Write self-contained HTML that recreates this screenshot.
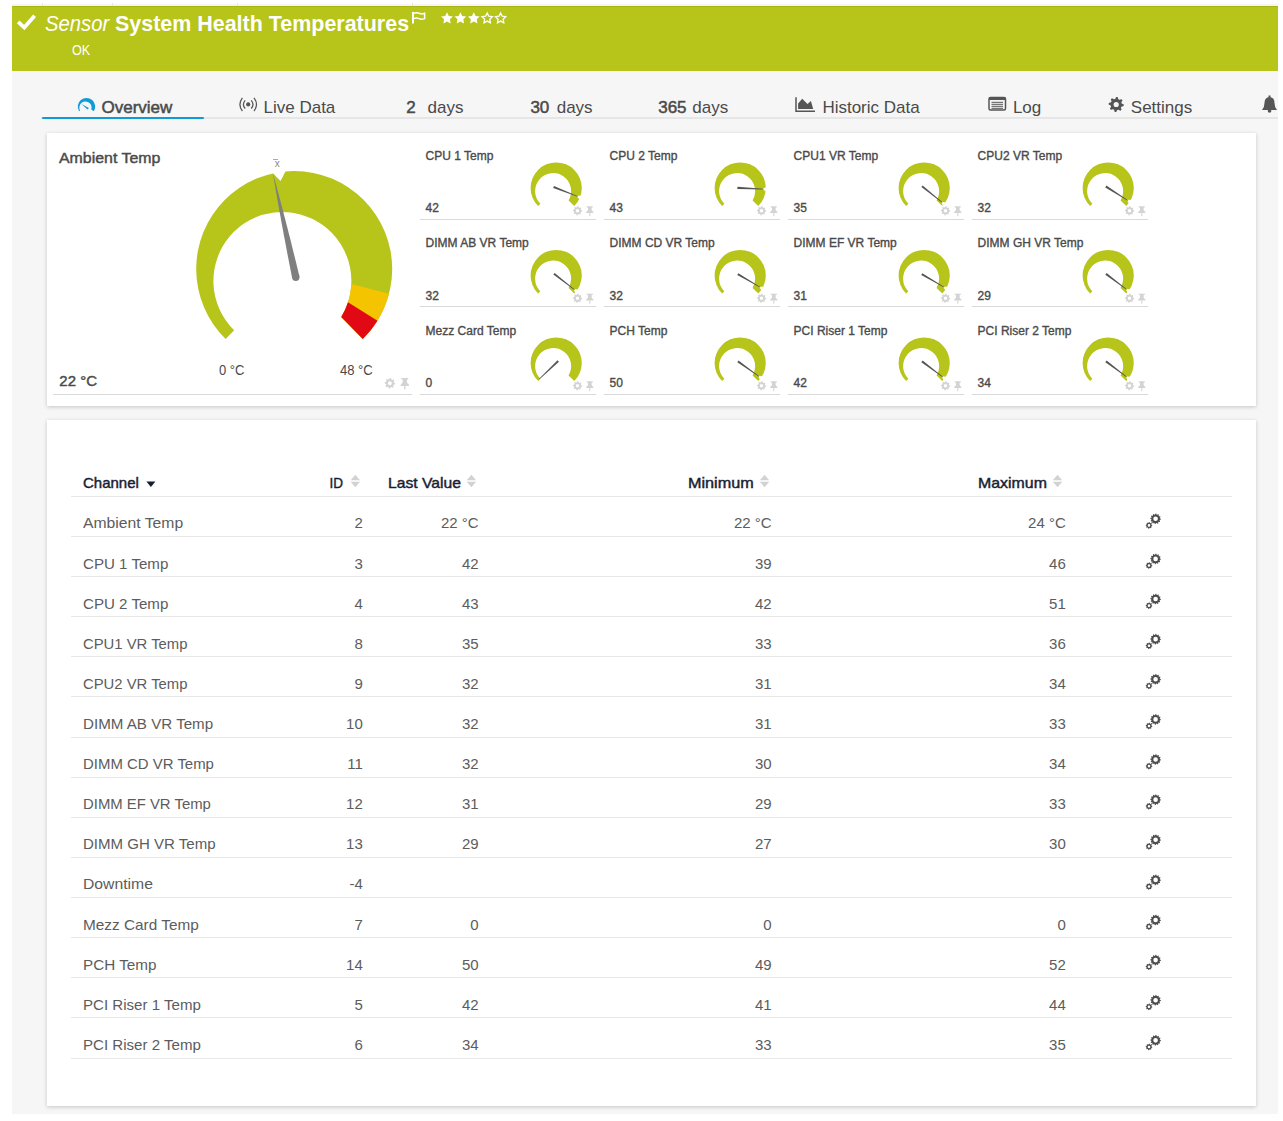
<!DOCTYPE html>
<html><head><meta charset="utf-8"><title>Sensor System Health Temperatures</title>
<style>
html,body{margin:0;padding:0;background:#fff;width:1283px;height:1121px;overflow:hidden;font-family:"Liberation Sans", sans-serif;}
.t{position:absolute;white-space:nowrap;}
.r{position:absolute;}
svg{position:absolute;left:0;top:0;}
</style></head><body>
<div class="r" style="left:12px;top:4px;width:1266px;height:1110px;background:#f6f6f6;"></div>
<div class="r" style="left:12px;top:4px;width:1266px;height:2px;background:#f4f4f6;"></div>
<div class="r" style="left:12px;top:6px;width:1266px;height:65px;background:#b7c41a;"></div>
<div class="r" style="left:12px;top:6px;width:1266px;height:1px;background:#a9b512;"></div>
<div class="r" style="left:42px;top:3px;width:1px;height:3px;background:#e6e6e6;"></div>
<div class="r" style="left:112px;top:3px;width:1px;height:3px;background:#e6e6e6;"></div>
<div class="r" style="left:237px;top:3px;width:1px;height:3px;background:#e6e6e6;"></div>
<div class="r" style="left:412px;top:3px;width:1px;height:3px;background:#e6e6e6;"></div>
<div class="r" style="left:41px;top:116.6px;width:1237px;height:2px;background:#e6e6e6;"></div>
<div class="r" style="left:41.5px;top:116.6px;width:162.5px;height:2.4px;background:#0f9ad8;border-radius:1px;"></div>
<div class="r" style="left:47px;top:133px;width:1209px;height:273px;background:#fff;box-shadow:0 1px 4px rgba(0,0,0,0.2);"></div>
<div class="r" style="left:47px;top:420px;width:1209px;height:686px;background:#fff;box-shadow:0 1px 4px rgba(0,0,0,0.2);"></div>
<svg width="1283" height="1121" viewBox="0 0 1283 1121" style="z-index:1"><polyline points="18.2,21.8 24.3,27.6 34.6,15.8" fill="none" stroke="#fff" stroke-width="3.8"/><path d="M413,12 V23.5" fill="none" stroke="#fff" stroke-width="2"/><path d="M414,13.3 Q416.5,12.2 419,13.3 Q421.5,14.4 424.6,13.3 V18.6 Q421.5,19.7 419,18.6 Q416.5,17.5 414,18.6" fill="none" stroke="#fff" stroke-width="1.5"/><polygon points="447.00,12.20 448.82,15.89 452.90,16.48 449.95,19.36 450.64,23.42 447.00,21.50 443.36,23.42 444.05,19.36 441.10,16.48 445.18,15.89" fill="#fff"/><polygon points="460.40,12.20 462.22,15.89 466.30,16.48 463.35,19.36 464.04,23.42 460.40,21.50 456.76,23.42 457.45,19.36 454.50,16.48 458.58,15.89" fill="#fff"/><polygon points="473.80,12.20 475.62,15.89 479.70,16.48 476.75,19.36 477.44,23.42 473.80,21.50 470.16,23.42 470.85,19.36 467.90,16.48 471.98,15.89" fill="#fff"/><polygon points="487.20,13.00 488.79,16.22 492.34,16.73 489.77,19.23 490.37,22.77 487.20,21.10 484.03,22.77 484.63,19.23 482.06,16.73 485.61,16.22" fill="none" stroke="#fff" stroke-width="1.3" stroke-linejoin="miter"/><polygon points="500.60,13.00 502.19,16.22 505.74,16.73 503.17,19.23 503.77,22.77 500.60,21.10 497.43,22.77 498.03,19.23 495.46,16.73 499.01,16.22" fill="none" stroke="#fff" stroke-width="1.3" stroke-linejoin="miter"/><path d="M79.12,111.21 A8.70,8.70 0 1 1 93.88,111.21 L91.27,109.58 A6.12,6.12 0 1 0 80.08,110.61 Z" fill="#0f9ad8"/><path d="M81.4,103.9 L88.9,107.9 L87.6,109.5 Z" fill="#0f9ad8"/><circle cx="248.2" cy="104.4" r="2.1" fill="#555"/><path d="M245.2,100.3 Q241.6,104.4 245.2,108.5 M251.2,100.3 Q254.8,104.4 251.2,108.5 M242.4,97.8 Q237.4,104.4 242.4,111.0 M254.0,97.8 Q259.0,104.4 254.0,111.0" fill="none" stroke="#555" stroke-width="1.25"/><path d="M796,97.2 V111.3 H815" fill="none" stroke="#555" stroke-width="1.5"/><path d="M798.1,109 V103.6 L802.2,98.7 L807.5,104 L810.9,101 L813.2,109 Z" fill="#555"/><rect x="989" y="97.5" width="16.5" height="12.5" rx="1.5" fill="none" stroke="#555" stroke-width="1.5"/><rect x="989" y="97.5" width="16.5" height="2.5" fill="#555"/><rect x="991.5" y="101.8" width="11.5" height="1" fill="#555"/><rect x="991.5" y="103.8" width="11.5" height="1" fill="#555"/><rect x="991.5" y="105.8" width="11.5" height="1" fill="#555"/><rect x="991.5" y="107.8" width="11.5" height="1" fill="#555"/><path d="M1116.20,96.90 L1117.68,97.05 L1118.34,99.33 L1119.31,99.84 L1121.57,99.13 L1122.52,100.28 L1121.37,102.36 L1121.69,103.41 L1123.80,104.50 L1123.65,105.98 L1121.37,106.64 L1120.86,107.61 L1121.57,109.87 L1120.42,110.82 L1118.34,109.67 L1117.29,109.99 L1116.20,112.10 L1114.72,111.95 L1114.06,109.67 L1113.09,109.16 L1110.83,109.87 L1109.88,108.72 L1111.03,106.64 L1110.71,105.59 L1108.60,104.50 L1108.75,103.02 L1111.03,102.36 L1111.54,101.39 L1110.83,99.13 L1111.98,98.18 L1114.06,99.33 L1115.11,99.01 Z M1118.80,104.50 A2.6,2.6 0 1 0 1113.60,104.50 A2.6,2.6 0 1 0 1118.80,104.50 Z" fill="#555" fill-rule="evenodd"/><path d="M1262,110 Q1264.5,107 1264.5,103 Q1264.5,97.5 1269.5,97 Q1274.5,97.5 1274.5,103 Q1274.5,107 1277,110 Z" fill="#555"/><circle cx="1269.5" cy="111" r="1.8" fill="#555"/><rect x="1268.5" y="95.5" width="2" height="2" fill="#555"/><path d="M225.63,339.02 A98.00,98.00 0 1 1 362.77,339.02 L341.23,317.03 A68.99,68.99 0 1 0 234.16,330.31 Z" fill="#b7c41a"/><path d="M388.99,293.87 A98.00,98.00 0 0 1 362.77,339.02 L341.23,317.03 A68.99,68.99 0 0 0 351.33,283.99 Z" fill="#f5c400"/><path d="M377.49,320.64 A98.00,98.00 0 0 1 362.77,339.02 L341.23,317.03 A68.99,68.99 0 0 0 348.00,302.36 Z" fill="#e10a14"/><path d="M271.36,171.64 L280.58,181.05 L286.53,169.29 Z" fill="#fff"/><path d="M299.41,276.40 Q288.28,229.60 272.80,172.80 Q282.62,230.84 292.19,278.00 Z" fill="#7f7f7f"/><circle cx="295.8" cy="277.2" r="3.7" fill="#7f7f7f"/><path d="M538.10,206.10 A25.60,25.60 0 1 1 574.30,206.10 L568.58,200.38 A18.02,18.02 0 1 0 540.35,203.85 Z" fill="#b7c41a"/><path d="M582.85,195.19 L576.66,196.10 L580.55,201.00 Z" fill="#fff"/><path d="M553.21,187.95 L577.64,196.87 L577.90,196.22 L553.98,185.99 Z" fill="#555"/><path d="M722.10,206.10 A25.60,25.60 0 1 1 758.30,206.10 L752.58,200.38 A18.02,18.02 0 1 0 724.35,203.85 Z" fill="#b7c41a"/><path d="M767.74,186.17 L762.18,189.04 L767.44,192.41 Z" fill="#fff"/><path d="M737.35,188.92 L763.36,189.44 L763.39,188.74 L737.45,186.82 Z" fill="#555"/><path d="M906.10,206.10 A25.60,25.60 0 1 1 942.30,206.10 L936.58,200.38 A18.02,18.02 0 1 0 908.35,203.85 Z" fill="#b7c41a"/><path d="M947.48,202.83 L941.30,201.85 L943.55,207.69 Z" fill="#fff"/><path d="M921.36,187.05 L942.01,202.87 L942.45,202.33 L922.68,185.42 Z" fill="#555"/><path d="M1090.10,206.10 A25.60,25.60 0 1 1 1126.30,206.10 L1120.58,200.38 A18.02,18.02 0 1 0 1092.35,203.85 Z" fill="#b7c41a"/><path d="M1133.03,200.06 L1126.78,199.79 L1129.68,205.33 Z" fill="#fff"/><path d="M1105.27,187.39 L1127.60,200.73 L1127.98,200.14 L1106.40,185.61 Z" fill="#555"/><path d="M538.10,293.60 A25.60,25.60 0 1 1 574.30,293.60 L568.58,287.88 A18.02,18.02 0 1 0 540.35,291.35 Z" fill="#b7c41a"/><path d="M579.78,289.84 L573.58,288.98 L575.95,294.78 Z" fill="#fff"/><path d="M553.34,274.61 L574.32,290.00 L574.75,289.44 L554.63,272.95 Z" fill="#555"/><path d="M722.10,293.60 A25.60,25.60 0 1 1 758.30,293.60 L752.58,287.88 A18.02,18.02 0 1 0 724.35,291.35 Z" fill="#b7c41a"/><path d="M765.43,286.68 L759.18,286.63 L762.27,292.07 Z" fill="#fff"/><path d="M737.25,274.99 L760.03,287.54 L760.39,286.94 L738.32,273.18 Z" fill="#555"/><path d="M906.10,293.60 A25.60,25.60 0 1 1 942.30,293.60 L936.58,287.88 A18.02,18.02 0 1 0 908.35,291.35 Z" fill="#b7c41a"/><path d="M949.41,286.73 L943.16,286.67 L946.24,292.11 Z" fill="#fff"/><path d="M921.25,274.98 L944.01,287.58 L944.37,286.97 L922.32,273.17 Z" fill="#555"/><path d="M1090.10,293.60 A25.60,25.60 0 1 1 1126.30,293.60 L1120.58,287.88 A18.02,18.02 0 1 0 1092.35,291.35 Z" fill="#b7c41a"/><path d="M1131.93,289.59 L1125.72,288.80 L1128.15,294.57 Z" fill="#fff"/><path d="M1105.33,274.64 L1126.47,289.81 L1126.89,289.25 L1106.60,272.97 Z" fill="#555"/><path d="M538.10,381.10 A25.60,25.60 0 1 1 574.30,381.10 L568.58,375.38 A18.02,18.02 0 1 0 540.35,378.85 Z" fill="#b7c41a"/><path d="M557.52,360.32 L539.08,378.66 L539.56,379.17 L558.96,361.84 Z" fill="#555"/><path d="M722.10,381.10 A25.60,25.60 0 1 1 758.30,381.10 L752.58,375.38 A18.02,18.02 0 1 0 724.35,378.85 Z" fill="#b7c41a"/><path d="M764.32,376.42 L758.09,375.81 L760.68,381.50 Z" fill="#fff"/><path d="M737.31,362.22 L758.86,376.79 L759.27,376.22 L738.53,360.52 Z" fill="#555"/><path d="M906.10,381.10 A25.60,25.60 0 1 1 942.30,381.10 L936.58,375.38 A18.02,18.02 0 1 0 908.35,378.85 Z" fill="#b7c41a"/><path d="M947.98,377.01 L941.77,376.24 L944.22,382.00 Z" fill="#fff"/><path d="M921.33,362.15 L942.52,377.24 L942.94,376.68 L922.60,360.48 Z" fill="#555"/><path d="M1090.10,381.10 A25.60,25.60 0 1 1 1126.30,381.10 L1120.58,375.38 A18.02,18.02 0 1 0 1092.35,378.85 Z" fill="#b7c41a"/><path d="M1131.96,377.05 L1125.75,376.27 L1128.19,382.03 Z" fill="#fff"/><path d="M1105.33,362.15 L1126.49,377.27 L1126.92,376.72 L1106.60,360.47 Z" fill="#555"/><path d="M577.50,206.20 L578.40,206.29 L578.84,207.57 L579.44,207.89 L580.75,207.55 L581.32,208.24 L580.73,209.46 L580.93,210.12 L582.10,210.80 L582.01,211.70 L580.73,212.14 L580.41,212.74 L580.75,214.05 L580.06,214.62 L578.84,214.03 L578.18,214.23 L577.50,215.40 L576.60,215.31 L576.16,214.03 L575.56,213.71 L574.25,214.05 L573.68,213.36 L574.27,212.14 L574.07,211.48 L572.90,210.80 L572.99,209.90 L574.27,209.46 L574.59,208.86 L574.25,207.55 L574.94,206.98 L576.16,207.57 L576.82,207.37 Z M579.20,210.80 A1.7,1.7 0 1 0 575.80,210.80 A1.7,1.7 0 1 0 579.20,210.80 Z" fill="#d3d3d3" fill-rule="evenodd"/><g transform="translate(589.80,210.80) scale(1.0) translate(-589.80,-210.80)"><path d="M586.80,206.30 h6 v1.3 h-1.2 v2.6 l1.8,1.8 v1.1 h-7.2 v-1.1 l1.8,-1.8 v-2.6 h-1.2 Z" fill="#d3d3d3"/><rect x="589.25" y="213.10" width="1.1" height="3" fill="#d3d3d3"/></g><path d="M761.50,206.20 L762.40,206.29 L762.84,207.57 L763.44,207.89 L764.75,207.55 L765.32,208.24 L764.73,209.46 L764.93,210.12 L766.10,210.80 L766.01,211.70 L764.73,212.14 L764.41,212.74 L764.75,214.05 L764.06,214.62 L762.84,214.03 L762.18,214.23 L761.50,215.40 L760.60,215.31 L760.16,214.03 L759.56,213.71 L758.25,214.05 L757.68,213.36 L758.27,212.14 L758.07,211.48 L756.90,210.80 L756.99,209.90 L758.27,209.46 L758.59,208.86 L758.25,207.55 L758.94,206.98 L760.16,207.57 L760.82,207.37 Z M763.20,210.80 A1.7,1.7 0 1 0 759.80,210.80 A1.7,1.7 0 1 0 763.20,210.80 Z" fill="#d3d3d3" fill-rule="evenodd"/><g transform="translate(773.80,210.80) scale(1.0) translate(-773.80,-210.80)"><path d="M770.80,206.30 h6 v1.3 h-1.2 v2.6 l1.8,1.8 v1.1 h-7.2 v-1.1 l1.8,-1.8 v-2.6 h-1.2 Z" fill="#d3d3d3"/><rect x="773.25" y="213.10" width="1.1" height="3" fill="#d3d3d3"/></g><path d="M945.50,206.20 L946.40,206.29 L946.84,207.57 L947.44,207.89 L948.75,207.55 L949.32,208.24 L948.73,209.46 L948.93,210.12 L950.10,210.80 L950.01,211.70 L948.73,212.14 L948.41,212.74 L948.75,214.05 L948.06,214.62 L946.84,214.03 L946.18,214.23 L945.50,215.40 L944.60,215.31 L944.16,214.03 L943.56,213.71 L942.25,214.05 L941.68,213.36 L942.27,212.14 L942.07,211.48 L940.90,210.80 L940.99,209.90 L942.27,209.46 L942.59,208.86 L942.25,207.55 L942.94,206.98 L944.16,207.57 L944.82,207.37 Z M947.20,210.80 A1.7,1.7 0 1 0 943.80,210.80 A1.7,1.7 0 1 0 947.20,210.80 Z" fill="#d3d3d3" fill-rule="evenodd"/><g transform="translate(957.80,210.80) scale(1.0) translate(-957.80,-210.80)"><path d="M954.80,206.30 h6 v1.3 h-1.2 v2.6 l1.8,1.8 v1.1 h-7.2 v-1.1 l1.8,-1.8 v-2.6 h-1.2 Z" fill="#d3d3d3"/><rect x="957.25" y="213.10" width="1.1" height="3" fill="#d3d3d3"/></g><path d="M1129.50,206.20 L1130.40,206.29 L1130.84,207.57 L1131.44,207.89 L1132.75,207.55 L1133.32,208.24 L1132.73,209.46 L1132.93,210.12 L1134.10,210.80 L1134.01,211.70 L1132.73,212.14 L1132.41,212.74 L1132.75,214.05 L1132.06,214.62 L1130.84,214.03 L1130.18,214.23 L1129.50,215.40 L1128.60,215.31 L1128.16,214.03 L1127.56,213.71 L1126.25,214.05 L1125.68,213.36 L1126.27,212.14 L1126.07,211.48 L1124.90,210.80 L1124.99,209.90 L1126.27,209.46 L1126.59,208.86 L1126.25,207.55 L1126.94,206.98 L1128.16,207.57 L1128.82,207.37 Z M1131.20,210.80 A1.7,1.7 0 1 0 1127.80,210.80 A1.7,1.7 0 1 0 1131.20,210.80 Z" fill="#d3d3d3" fill-rule="evenodd"/><g transform="translate(1141.80,210.80) scale(1.0) translate(-1141.80,-210.80)"><path d="M1138.80,206.30 h6 v1.3 h-1.2 v2.6 l1.8,1.8 v1.1 h-7.2 v-1.1 l1.8,-1.8 v-2.6 h-1.2 Z" fill="#d3d3d3"/><rect x="1141.25" y="213.10" width="1.1" height="3" fill="#d3d3d3"/></g><path d="M577.50,293.70 L578.40,293.79 L578.84,295.07 L579.44,295.39 L580.75,295.05 L581.32,295.74 L580.73,296.96 L580.93,297.62 L582.10,298.30 L582.01,299.20 L580.73,299.64 L580.41,300.24 L580.75,301.55 L580.06,302.12 L578.84,301.53 L578.18,301.73 L577.50,302.90 L576.60,302.81 L576.16,301.53 L575.56,301.21 L574.25,301.55 L573.68,300.86 L574.27,299.64 L574.07,298.98 L572.90,298.30 L572.99,297.40 L574.27,296.96 L574.59,296.36 L574.25,295.05 L574.94,294.48 L576.16,295.07 L576.82,294.87 Z M579.20,298.30 A1.7,1.7 0 1 0 575.80,298.30 A1.7,1.7 0 1 0 579.20,298.30 Z" fill="#d3d3d3" fill-rule="evenodd"/><g transform="translate(589.80,298.30) scale(1.0) translate(-589.80,-298.30)"><path d="M586.80,293.80 h6 v1.3 h-1.2 v2.6 l1.8,1.8 v1.1 h-7.2 v-1.1 l1.8,-1.8 v-2.6 h-1.2 Z" fill="#d3d3d3"/><rect x="589.25" y="300.60" width="1.1" height="3" fill="#d3d3d3"/></g><path d="M761.50,293.70 L762.40,293.79 L762.84,295.07 L763.44,295.39 L764.75,295.05 L765.32,295.74 L764.73,296.96 L764.93,297.62 L766.10,298.30 L766.01,299.20 L764.73,299.64 L764.41,300.24 L764.75,301.55 L764.06,302.12 L762.84,301.53 L762.18,301.73 L761.50,302.90 L760.60,302.81 L760.16,301.53 L759.56,301.21 L758.25,301.55 L757.68,300.86 L758.27,299.64 L758.07,298.98 L756.90,298.30 L756.99,297.40 L758.27,296.96 L758.59,296.36 L758.25,295.05 L758.94,294.48 L760.16,295.07 L760.82,294.87 Z M763.20,298.30 A1.7,1.7 0 1 0 759.80,298.30 A1.7,1.7 0 1 0 763.20,298.30 Z" fill="#d3d3d3" fill-rule="evenodd"/><g transform="translate(773.80,298.30) scale(1.0) translate(-773.80,-298.30)"><path d="M770.80,293.80 h6 v1.3 h-1.2 v2.6 l1.8,1.8 v1.1 h-7.2 v-1.1 l1.8,-1.8 v-2.6 h-1.2 Z" fill="#d3d3d3"/><rect x="773.25" y="300.60" width="1.1" height="3" fill="#d3d3d3"/></g><path d="M945.50,293.70 L946.40,293.79 L946.84,295.07 L947.44,295.39 L948.75,295.05 L949.32,295.74 L948.73,296.96 L948.93,297.62 L950.10,298.30 L950.01,299.20 L948.73,299.64 L948.41,300.24 L948.75,301.55 L948.06,302.12 L946.84,301.53 L946.18,301.73 L945.50,302.90 L944.60,302.81 L944.16,301.53 L943.56,301.21 L942.25,301.55 L941.68,300.86 L942.27,299.64 L942.07,298.98 L940.90,298.30 L940.99,297.40 L942.27,296.96 L942.59,296.36 L942.25,295.05 L942.94,294.48 L944.16,295.07 L944.82,294.87 Z M947.20,298.30 A1.7,1.7 0 1 0 943.80,298.30 A1.7,1.7 0 1 0 947.20,298.30 Z" fill="#d3d3d3" fill-rule="evenodd"/><g transform="translate(957.80,298.30) scale(1.0) translate(-957.80,-298.30)"><path d="M954.80,293.80 h6 v1.3 h-1.2 v2.6 l1.8,1.8 v1.1 h-7.2 v-1.1 l1.8,-1.8 v-2.6 h-1.2 Z" fill="#d3d3d3"/><rect x="957.25" y="300.60" width="1.1" height="3" fill="#d3d3d3"/></g><path d="M1129.50,293.70 L1130.40,293.79 L1130.84,295.07 L1131.44,295.39 L1132.75,295.05 L1133.32,295.74 L1132.73,296.96 L1132.93,297.62 L1134.10,298.30 L1134.01,299.20 L1132.73,299.64 L1132.41,300.24 L1132.75,301.55 L1132.06,302.12 L1130.84,301.53 L1130.18,301.73 L1129.50,302.90 L1128.60,302.81 L1128.16,301.53 L1127.56,301.21 L1126.25,301.55 L1125.68,300.86 L1126.27,299.64 L1126.07,298.98 L1124.90,298.30 L1124.99,297.40 L1126.27,296.96 L1126.59,296.36 L1126.25,295.05 L1126.94,294.48 L1128.16,295.07 L1128.82,294.87 Z M1131.20,298.30 A1.7,1.7 0 1 0 1127.80,298.30 A1.7,1.7 0 1 0 1131.20,298.30 Z" fill="#d3d3d3" fill-rule="evenodd"/><g transform="translate(1141.80,298.30) scale(1.0) translate(-1141.80,-298.30)"><path d="M1138.80,293.80 h6 v1.3 h-1.2 v2.6 l1.8,1.8 v1.1 h-7.2 v-1.1 l1.8,-1.8 v-2.6 h-1.2 Z" fill="#d3d3d3"/><rect x="1141.25" y="300.60" width="1.1" height="3" fill="#d3d3d3"/></g><path d="M577.50,381.20 L578.40,381.29 L578.84,382.57 L579.44,382.89 L580.75,382.55 L581.32,383.24 L580.73,384.46 L580.93,385.12 L582.10,385.80 L582.01,386.70 L580.73,387.14 L580.41,387.74 L580.75,389.05 L580.06,389.62 L578.84,389.03 L578.18,389.23 L577.50,390.40 L576.60,390.31 L576.16,389.03 L575.56,388.71 L574.25,389.05 L573.68,388.36 L574.27,387.14 L574.07,386.48 L572.90,385.80 L572.99,384.90 L574.27,384.46 L574.59,383.86 L574.25,382.55 L574.94,381.98 L576.16,382.57 L576.82,382.37 Z M579.20,385.80 A1.7,1.7 0 1 0 575.80,385.80 A1.7,1.7 0 1 0 579.20,385.80 Z" fill="#d3d3d3" fill-rule="evenodd"/><g transform="translate(589.80,385.80) scale(1.0) translate(-589.80,-385.80)"><path d="M586.80,381.30 h6 v1.3 h-1.2 v2.6 l1.8,1.8 v1.1 h-7.2 v-1.1 l1.8,-1.8 v-2.6 h-1.2 Z" fill="#d3d3d3"/><rect x="589.25" y="388.10" width="1.1" height="3" fill="#d3d3d3"/></g><path d="M761.50,381.20 L762.40,381.29 L762.84,382.57 L763.44,382.89 L764.75,382.55 L765.32,383.24 L764.73,384.46 L764.93,385.12 L766.10,385.80 L766.01,386.70 L764.73,387.14 L764.41,387.74 L764.75,389.05 L764.06,389.62 L762.84,389.03 L762.18,389.23 L761.50,390.40 L760.60,390.31 L760.16,389.03 L759.56,388.71 L758.25,389.05 L757.68,388.36 L758.27,387.14 L758.07,386.48 L756.90,385.80 L756.99,384.90 L758.27,384.46 L758.59,383.86 L758.25,382.55 L758.94,381.98 L760.16,382.57 L760.82,382.37 Z M763.20,385.80 A1.7,1.7 0 1 0 759.80,385.80 A1.7,1.7 0 1 0 763.20,385.80 Z" fill="#d3d3d3" fill-rule="evenodd"/><g transform="translate(773.80,385.80) scale(1.0) translate(-773.80,-385.80)"><path d="M770.80,381.30 h6 v1.3 h-1.2 v2.6 l1.8,1.8 v1.1 h-7.2 v-1.1 l1.8,-1.8 v-2.6 h-1.2 Z" fill="#d3d3d3"/><rect x="773.25" y="388.10" width="1.1" height="3" fill="#d3d3d3"/></g><path d="M945.50,381.20 L946.40,381.29 L946.84,382.57 L947.44,382.89 L948.75,382.55 L949.32,383.24 L948.73,384.46 L948.93,385.12 L950.10,385.80 L950.01,386.70 L948.73,387.14 L948.41,387.74 L948.75,389.05 L948.06,389.62 L946.84,389.03 L946.18,389.23 L945.50,390.40 L944.60,390.31 L944.16,389.03 L943.56,388.71 L942.25,389.05 L941.68,388.36 L942.27,387.14 L942.07,386.48 L940.90,385.80 L940.99,384.90 L942.27,384.46 L942.59,383.86 L942.25,382.55 L942.94,381.98 L944.16,382.57 L944.82,382.37 Z M947.20,385.80 A1.7,1.7 0 1 0 943.80,385.80 A1.7,1.7 0 1 0 947.20,385.80 Z" fill="#d3d3d3" fill-rule="evenodd"/><g transform="translate(957.80,385.80) scale(1.0) translate(-957.80,-385.80)"><path d="M954.80,381.30 h6 v1.3 h-1.2 v2.6 l1.8,1.8 v1.1 h-7.2 v-1.1 l1.8,-1.8 v-2.6 h-1.2 Z" fill="#d3d3d3"/><rect x="957.25" y="388.10" width="1.1" height="3" fill="#d3d3d3"/></g><path d="M1129.50,381.20 L1130.40,381.29 L1130.84,382.57 L1131.44,382.89 L1132.75,382.55 L1133.32,383.24 L1132.73,384.46 L1132.93,385.12 L1134.10,385.80 L1134.01,386.70 L1132.73,387.14 L1132.41,387.74 L1132.75,389.05 L1132.06,389.62 L1130.84,389.03 L1130.18,389.23 L1129.50,390.40 L1128.60,390.31 L1128.16,389.03 L1127.56,388.71 L1126.25,389.05 L1125.68,388.36 L1126.27,387.14 L1126.07,386.48 L1124.90,385.80 L1124.99,384.90 L1126.27,384.46 L1126.59,383.86 L1126.25,382.55 L1126.94,381.98 L1128.16,382.57 L1128.82,382.37 Z M1131.20,385.80 A1.7,1.7 0 1 0 1127.80,385.80 A1.7,1.7 0 1 0 1131.20,385.80 Z" fill="#d3d3d3" fill-rule="evenodd"/><g transform="translate(1141.80,385.80) scale(1.0) translate(-1141.80,-385.80)"><path d="M1138.80,381.30 h6 v1.3 h-1.2 v2.6 l1.8,1.8 v1.1 h-7.2 v-1.1 l1.8,-1.8 v-2.6 h-1.2 Z" fill="#d3d3d3"/><rect x="1141.25" y="388.10" width="1.1" height="3" fill="#d3d3d3"/></g><path d="M389.90,378.01 L390.93,378.11 L391.44,379.58 L392.14,379.95 L393.64,379.56 L394.30,380.36 L393.62,381.76 L393.85,382.51 L395.19,383.30 L395.09,384.33 L393.62,384.84 L393.25,385.54 L393.64,387.04 L392.84,387.70 L391.44,387.02 L390.69,387.25 L389.90,388.59 L388.87,388.49 L388.36,387.02 L387.66,386.65 L386.16,387.04 L385.50,386.24 L386.18,384.84 L385.95,384.09 L384.61,383.30 L384.71,382.27 L386.18,381.76 L386.55,381.06 L386.16,379.56 L386.96,378.90 L388.36,379.58 L389.11,379.35 Z M391.85,383.30 A1.9549999999999998,1.9549999999999998 0 1 0 387.94,383.30 A1.9549999999999998,1.9549999999999998 0 1 0 391.85,383.30 Z" fill="#d3d3d3" fill-rule="evenodd"/><g transform="translate(404.80,383.30) scale(1.15) translate(-404.80,-383.30)"><path d="M401.80,378.80 h6 v1.3 h-1.2 v2.6 l1.8,1.8 v1.1 h-7.2 v-1.1 l1.8,-1.8 v-2.6 h-1.2 Z" fill="#d3d3d3"/><rect x="404.25" y="385.60" width="1.1" height="3" fill="#d3d3d3"/></g><path d="M1155.60,513.50 L1156.29,513.55 L1156.71,514.65 L1157.25,514.83 L1158.25,514.21 L1158.83,514.60 L1158.64,515.76 L1159.01,516.18 L1160.19,516.15 L1160.50,516.77 L1159.75,517.69 L1159.86,518.24 L1160.90,518.80 L1160.85,519.49 L1159.75,519.91 L1159.57,520.45 L1160.19,521.45 L1159.80,522.03 L1158.64,521.84 L1158.22,522.21 L1158.25,523.39 L1157.63,523.70 L1156.71,522.95 L1156.16,523.06 L1155.60,524.10 L1154.91,524.05 L1154.49,522.95 L1153.95,522.77 L1152.95,523.39 L1152.37,523.00 L1152.56,521.84 L1152.19,521.42 L1151.01,521.45 L1150.70,520.83 L1151.45,519.91 L1151.34,519.36 L1150.30,518.80 L1150.35,518.11 L1151.45,517.69 L1151.63,517.15 L1151.01,516.15 L1151.40,515.57 L1152.56,515.76 L1152.98,515.39 L1152.95,514.21 L1153.57,513.90 L1154.49,514.65 L1155.04,514.54 Z M1157.90,518.80 A2.3,2.3 0 1 0 1153.30,518.80 A2.3,2.3 0 1 0 1157.90,518.80 Z" fill="#4d4d4d" fill-rule="evenodd"/><path d="M1149.00,522.10 L1149.64,522.16 L1149.99,523.00 L1150.44,523.24 L1151.33,523.07 L1151.74,523.57 L1151.40,524.41 L1151.55,524.89 L1152.30,525.40 L1152.24,526.04 L1151.40,526.39 L1151.16,526.84 L1151.33,527.73 L1150.83,528.14 L1149.99,527.80 L1149.51,527.95 L1149.00,528.70 L1148.36,528.64 L1148.01,527.80 L1147.56,527.56 L1146.67,527.73 L1146.26,527.23 L1146.60,526.39 L1146.45,525.91 L1145.70,525.40 L1145.76,524.76 L1146.60,524.41 L1146.84,523.96 L1146.67,523.07 L1147.17,522.66 L1148.01,523.00 L1148.49,522.85 Z M1150.30,525.40 A1.3,1.3 0 1 0 1147.70,525.40 A1.3,1.3 0 1 0 1150.30,525.40 Z" fill="#4d4d4d" fill-rule="evenodd"/><line x1="1151.00" y1="523.40" x2="1152.20" y2="522.20" stroke="#4d4d4d" stroke-width="0.8"/><path d="M1155.60,553.62 L1156.29,553.67 L1156.71,554.77 L1157.25,554.95 L1158.25,554.33 L1158.83,554.72 L1158.64,555.88 L1159.01,556.30 L1160.19,556.27 L1160.50,556.89 L1159.75,557.81 L1159.86,558.36 L1160.90,558.92 L1160.85,559.61 L1159.75,560.03 L1159.57,560.57 L1160.19,561.57 L1159.80,562.15 L1158.64,561.96 L1158.22,562.33 L1158.25,563.51 L1157.63,563.82 L1156.71,563.07 L1156.16,563.18 L1155.60,564.22 L1154.91,564.17 L1154.49,563.07 L1153.95,562.89 L1152.95,563.51 L1152.37,563.12 L1152.56,561.96 L1152.19,561.54 L1151.01,561.57 L1150.70,560.95 L1151.45,560.03 L1151.34,559.48 L1150.30,558.92 L1150.35,558.23 L1151.45,557.81 L1151.63,557.27 L1151.01,556.27 L1151.40,555.69 L1152.56,555.88 L1152.98,555.51 L1152.95,554.33 L1153.57,554.02 L1154.49,554.77 L1155.04,554.66 Z M1157.90,558.92 A2.3,2.3 0 1 0 1153.30,558.92 A2.3,2.3 0 1 0 1157.90,558.92 Z" fill="#4d4d4d" fill-rule="evenodd"/><path d="M1149.00,562.22 L1149.64,562.28 L1149.99,563.12 L1150.44,563.36 L1151.33,563.19 L1151.74,563.69 L1151.40,564.53 L1151.55,565.01 L1152.30,565.52 L1152.24,566.16 L1151.40,566.51 L1151.16,566.96 L1151.33,567.85 L1150.83,568.26 L1149.99,567.92 L1149.51,568.07 L1149.00,568.82 L1148.36,568.76 L1148.01,567.92 L1147.56,567.68 L1146.67,567.85 L1146.26,567.35 L1146.60,566.51 L1146.45,566.03 L1145.70,565.52 L1145.76,564.88 L1146.60,564.53 L1146.84,564.08 L1146.67,563.19 L1147.17,562.78 L1148.01,563.12 L1148.49,562.97 Z M1150.30,565.52 A1.3,1.3 0 1 0 1147.70,565.52 A1.3,1.3 0 1 0 1150.30,565.52 Z" fill="#4d4d4d" fill-rule="evenodd"/><line x1="1151.00" y1="563.52" x2="1152.20" y2="562.32" stroke="#4d4d4d" stroke-width="0.8"/><path d="M1155.60,593.74 L1156.29,593.79 L1156.71,594.89 L1157.25,595.07 L1158.25,594.45 L1158.83,594.84 L1158.64,596.00 L1159.01,596.42 L1160.19,596.39 L1160.50,597.01 L1159.75,597.93 L1159.86,598.48 L1160.90,599.04 L1160.85,599.73 L1159.75,600.15 L1159.57,600.69 L1160.19,601.69 L1159.80,602.27 L1158.64,602.08 L1158.22,602.45 L1158.25,603.63 L1157.63,603.94 L1156.71,603.19 L1156.16,603.30 L1155.60,604.34 L1154.91,604.29 L1154.49,603.19 L1153.95,603.01 L1152.95,603.63 L1152.37,603.24 L1152.56,602.08 L1152.19,601.66 L1151.01,601.69 L1150.70,601.07 L1151.45,600.15 L1151.34,599.60 L1150.30,599.04 L1150.35,598.35 L1151.45,597.93 L1151.63,597.39 L1151.01,596.39 L1151.40,595.81 L1152.56,596.00 L1152.98,595.63 L1152.95,594.45 L1153.57,594.14 L1154.49,594.89 L1155.04,594.78 Z M1157.90,599.04 A2.3,2.3 0 1 0 1153.30,599.04 A2.3,2.3 0 1 0 1157.90,599.04 Z" fill="#4d4d4d" fill-rule="evenodd"/><path d="M1149.00,602.34 L1149.64,602.40 L1149.99,603.24 L1150.44,603.48 L1151.33,603.31 L1151.74,603.81 L1151.40,604.65 L1151.55,605.13 L1152.30,605.64 L1152.24,606.28 L1151.40,606.63 L1151.16,607.08 L1151.33,607.97 L1150.83,608.38 L1149.99,608.04 L1149.51,608.19 L1149.00,608.94 L1148.36,608.88 L1148.01,608.04 L1147.56,607.80 L1146.67,607.97 L1146.26,607.47 L1146.60,606.63 L1146.45,606.15 L1145.70,605.64 L1145.76,605.00 L1146.60,604.65 L1146.84,604.20 L1146.67,603.31 L1147.17,602.90 L1148.01,603.24 L1148.49,603.09 Z M1150.30,605.64 A1.3,1.3 0 1 0 1147.70,605.64 A1.3,1.3 0 1 0 1150.30,605.64 Z" fill="#4d4d4d" fill-rule="evenodd"/><line x1="1151.00" y1="603.64" x2="1152.20" y2="602.44" stroke="#4d4d4d" stroke-width="0.8"/><path d="M1155.60,633.86 L1156.29,633.91 L1156.71,635.01 L1157.25,635.19 L1158.25,634.57 L1158.83,634.96 L1158.64,636.12 L1159.01,636.54 L1160.19,636.51 L1160.50,637.13 L1159.75,638.05 L1159.86,638.60 L1160.90,639.16 L1160.85,639.85 L1159.75,640.27 L1159.57,640.81 L1160.19,641.81 L1159.80,642.39 L1158.64,642.20 L1158.22,642.57 L1158.25,643.75 L1157.63,644.06 L1156.71,643.31 L1156.16,643.42 L1155.60,644.46 L1154.91,644.41 L1154.49,643.31 L1153.95,643.13 L1152.95,643.75 L1152.37,643.36 L1152.56,642.20 L1152.19,641.78 L1151.01,641.81 L1150.70,641.19 L1151.45,640.27 L1151.34,639.72 L1150.30,639.16 L1150.35,638.47 L1151.45,638.05 L1151.63,637.51 L1151.01,636.51 L1151.40,635.93 L1152.56,636.12 L1152.98,635.75 L1152.95,634.57 L1153.57,634.26 L1154.49,635.01 L1155.04,634.90 Z M1157.90,639.16 A2.3,2.3 0 1 0 1153.30,639.16 A2.3,2.3 0 1 0 1157.90,639.16 Z" fill="#4d4d4d" fill-rule="evenodd"/><path d="M1149.00,642.46 L1149.64,642.52 L1149.99,643.36 L1150.44,643.60 L1151.33,643.43 L1151.74,643.93 L1151.40,644.77 L1151.55,645.25 L1152.30,645.76 L1152.24,646.40 L1151.40,646.75 L1151.16,647.20 L1151.33,648.09 L1150.83,648.50 L1149.99,648.16 L1149.51,648.31 L1149.00,649.06 L1148.36,649.00 L1148.01,648.16 L1147.56,647.92 L1146.67,648.09 L1146.26,647.59 L1146.60,646.75 L1146.45,646.27 L1145.70,645.76 L1145.76,645.12 L1146.60,644.77 L1146.84,644.32 L1146.67,643.43 L1147.17,643.02 L1148.01,643.36 L1148.49,643.21 Z M1150.30,645.76 A1.3,1.3 0 1 0 1147.70,645.76 A1.3,1.3 0 1 0 1150.30,645.76 Z" fill="#4d4d4d" fill-rule="evenodd"/><line x1="1151.00" y1="643.76" x2="1152.20" y2="642.56" stroke="#4d4d4d" stroke-width="0.8"/><path d="M1155.60,673.98 L1156.29,674.03 L1156.71,675.13 L1157.25,675.31 L1158.25,674.69 L1158.83,675.08 L1158.64,676.24 L1159.01,676.66 L1160.19,676.63 L1160.50,677.25 L1159.75,678.17 L1159.86,678.72 L1160.90,679.28 L1160.85,679.97 L1159.75,680.39 L1159.57,680.93 L1160.19,681.93 L1159.80,682.51 L1158.64,682.32 L1158.22,682.69 L1158.25,683.87 L1157.63,684.18 L1156.71,683.43 L1156.16,683.54 L1155.60,684.58 L1154.91,684.53 L1154.49,683.43 L1153.95,683.25 L1152.95,683.87 L1152.37,683.48 L1152.56,682.32 L1152.19,681.90 L1151.01,681.93 L1150.70,681.31 L1151.45,680.39 L1151.34,679.84 L1150.30,679.28 L1150.35,678.59 L1151.45,678.17 L1151.63,677.63 L1151.01,676.63 L1151.40,676.05 L1152.56,676.24 L1152.98,675.87 L1152.95,674.69 L1153.57,674.38 L1154.49,675.13 L1155.04,675.02 Z M1157.90,679.28 A2.3,2.3 0 1 0 1153.30,679.28 A2.3,2.3 0 1 0 1157.90,679.28 Z" fill="#4d4d4d" fill-rule="evenodd"/><path d="M1149.00,682.58 L1149.64,682.64 L1149.99,683.48 L1150.44,683.72 L1151.33,683.55 L1151.74,684.05 L1151.40,684.89 L1151.55,685.37 L1152.30,685.88 L1152.24,686.52 L1151.40,686.87 L1151.16,687.32 L1151.33,688.21 L1150.83,688.62 L1149.99,688.28 L1149.51,688.43 L1149.00,689.18 L1148.36,689.12 L1148.01,688.28 L1147.56,688.04 L1146.67,688.21 L1146.26,687.71 L1146.60,686.87 L1146.45,686.39 L1145.70,685.88 L1145.76,685.24 L1146.60,684.89 L1146.84,684.44 L1146.67,683.55 L1147.17,683.14 L1148.01,683.48 L1148.49,683.33 Z M1150.30,685.88 A1.3,1.3 0 1 0 1147.70,685.88 A1.3,1.3 0 1 0 1150.30,685.88 Z" fill="#4d4d4d" fill-rule="evenodd"/><line x1="1151.00" y1="683.88" x2="1152.20" y2="682.68" stroke="#4d4d4d" stroke-width="0.8"/><path d="M1155.60,714.10 L1156.29,714.15 L1156.71,715.25 L1157.25,715.43 L1158.25,714.81 L1158.83,715.20 L1158.64,716.36 L1159.01,716.78 L1160.19,716.75 L1160.50,717.37 L1159.75,718.29 L1159.86,718.84 L1160.90,719.40 L1160.85,720.09 L1159.75,720.51 L1159.57,721.05 L1160.19,722.05 L1159.80,722.63 L1158.64,722.44 L1158.22,722.81 L1158.25,723.99 L1157.63,724.30 L1156.71,723.55 L1156.16,723.66 L1155.60,724.70 L1154.91,724.65 L1154.49,723.55 L1153.95,723.37 L1152.95,723.99 L1152.37,723.60 L1152.56,722.44 L1152.19,722.02 L1151.01,722.05 L1150.70,721.43 L1151.45,720.51 L1151.34,719.96 L1150.30,719.40 L1150.35,718.71 L1151.45,718.29 L1151.63,717.75 L1151.01,716.75 L1151.40,716.17 L1152.56,716.36 L1152.98,715.99 L1152.95,714.81 L1153.57,714.50 L1154.49,715.25 L1155.04,715.14 Z M1157.90,719.40 A2.3,2.3 0 1 0 1153.30,719.40 A2.3,2.3 0 1 0 1157.90,719.40 Z" fill="#4d4d4d" fill-rule="evenodd"/><path d="M1149.00,722.70 L1149.64,722.76 L1149.99,723.60 L1150.44,723.84 L1151.33,723.67 L1151.74,724.17 L1151.40,725.01 L1151.55,725.49 L1152.30,726.00 L1152.24,726.64 L1151.40,726.99 L1151.16,727.44 L1151.33,728.33 L1150.83,728.74 L1149.99,728.40 L1149.51,728.55 L1149.00,729.30 L1148.36,729.24 L1148.01,728.40 L1147.56,728.16 L1146.67,728.33 L1146.26,727.83 L1146.60,726.99 L1146.45,726.51 L1145.70,726.00 L1145.76,725.36 L1146.60,725.01 L1146.84,724.56 L1146.67,723.67 L1147.17,723.26 L1148.01,723.60 L1148.49,723.45 Z M1150.30,726.00 A1.3,1.3 0 1 0 1147.70,726.00 A1.3,1.3 0 1 0 1150.30,726.00 Z" fill="#4d4d4d" fill-rule="evenodd"/><line x1="1151.00" y1="724.00" x2="1152.20" y2="722.80" stroke="#4d4d4d" stroke-width="0.8"/><path d="M1155.60,754.22 L1156.29,754.27 L1156.71,755.37 L1157.25,755.55 L1158.25,754.93 L1158.83,755.32 L1158.64,756.48 L1159.01,756.90 L1160.19,756.87 L1160.50,757.49 L1159.75,758.41 L1159.86,758.96 L1160.90,759.52 L1160.85,760.21 L1159.75,760.63 L1159.57,761.17 L1160.19,762.17 L1159.80,762.75 L1158.64,762.56 L1158.22,762.93 L1158.25,764.11 L1157.63,764.42 L1156.71,763.67 L1156.16,763.78 L1155.60,764.82 L1154.91,764.77 L1154.49,763.67 L1153.95,763.49 L1152.95,764.11 L1152.37,763.72 L1152.56,762.56 L1152.19,762.14 L1151.01,762.17 L1150.70,761.55 L1151.45,760.63 L1151.34,760.08 L1150.30,759.52 L1150.35,758.83 L1151.45,758.41 L1151.63,757.87 L1151.01,756.87 L1151.40,756.29 L1152.56,756.48 L1152.98,756.11 L1152.95,754.93 L1153.57,754.62 L1154.49,755.37 L1155.04,755.26 Z M1157.90,759.52 A2.3,2.3 0 1 0 1153.30,759.52 A2.3,2.3 0 1 0 1157.90,759.52 Z" fill="#4d4d4d" fill-rule="evenodd"/><path d="M1149.00,762.82 L1149.64,762.88 L1149.99,763.72 L1150.44,763.96 L1151.33,763.79 L1151.74,764.29 L1151.40,765.13 L1151.55,765.61 L1152.30,766.12 L1152.24,766.76 L1151.40,767.11 L1151.16,767.56 L1151.33,768.45 L1150.83,768.86 L1149.99,768.52 L1149.51,768.67 L1149.00,769.42 L1148.36,769.36 L1148.01,768.52 L1147.56,768.28 L1146.67,768.45 L1146.26,767.95 L1146.60,767.11 L1146.45,766.63 L1145.70,766.12 L1145.76,765.48 L1146.60,765.13 L1146.84,764.68 L1146.67,763.79 L1147.17,763.38 L1148.01,763.72 L1148.49,763.57 Z M1150.30,766.12 A1.3,1.3 0 1 0 1147.70,766.12 A1.3,1.3 0 1 0 1150.30,766.12 Z" fill="#4d4d4d" fill-rule="evenodd"/><line x1="1151.00" y1="764.12" x2="1152.20" y2="762.92" stroke="#4d4d4d" stroke-width="0.8"/><path d="M1155.60,794.34 L1156.29,794.39 L1156.71,795.49 L1157.25,795.67 L1158.25,795.05 L1158.83,795.44 L1158.64,796.60 L1159.01,797.02 L1160.19,796.99 L1160.50,797.61 L1159.75,798.53 L1159.86,799.08 L1160.90,799.64 L1160.85,800.33 L1159.75,800.75 L1159.57,801.29 L1160.19,802.29 L1159.80,802.87 L1158.64,802.68 L1158.22,803.05 L1158.25,804.23 L1157.63,804.54 L1156.71,803.79 L1156.16,803.90 L1155.60,804.94 L1154.91,804.89 L1154.49,803.79 L1153.95,803.61 L1152.95,804.23 L1152.37,803.84 L1152.56,802.68 L1152.19,802.26 L1151.01,802.29 L1150.70,801.67 L1151.45,800.75 L1151.34,800.20 L1150.30,799.64 L1150.35,798.95 L1151.45,798.53 L1151.63,797.99 L1151.01,796.99 L1151.40,796.41 L1152.56,796.60 L1152.98,796.23 L1152.95,795.05 L1153.57,794.74 L1154.49,795.49 L1155.04,795.38 Z M1157.90,799.64 A2.3,2.3 0 1 0 1153.30,799.64 A2.3,2.3 0 1 0 1157.90,799.64 Z" fill="#4d4d4d" fill-rule="evenodd"/><path d="M1149.00,802.94 L1149.64,803.00 L1149.99,803.84 L1150.44,804.08 L1151.33,803.91 L1151.74,804.41 L1151.40,805.25 L1151.55,805.73 L1152.30,806.24 L1152.24,806.88 L1151.40,807.23 L1151.16,807.68 L1151.33,808.57 L1150.83,808.98 L1149.99,808.64 L1149.51,808.79 L1149.00,809.54 L1148.36,809.48 L1148.01,808.64 L1147.56,808.40 L1146.67,808.57 L1146.26,808.07 L1146.60,807.23 L1146.45,806.75 L1145.70,806.24 L1145.76,805.60 L1146.60,805.25 L1146.84,804.80 L1146.67,803.91 L1147.17,803.50 L1148.01,803.84 L1148.49,803.69 Z M1150.30,806.24 A1.3,1.3 0 1 0 1147.70,806.24 A1.3,1.3 0 1 0 1150.30,806.24 Z" fill="#4d4d4d" fill-rule="evenodd"/><line x1="1151.00" y1="804.24" x2="1152.20" y2="803.04" stroke="#4d4d4d" stroke-width="0.8"/><path d="M1155.60,834.46 L1156.29,834.51 L1156.71,835.61 L1157.25,835.79 L1158.25,835.17 L1158.83,835.56 L1158.64,836.72 L1159.01,837.14 L1160.19,837.11 L1160.50,837.73 L1159.75,838.65 L1159.86,839.20 L1160.90,839.76 L1160.85,840.45 L1159.75,840.87 L1159.57,841.41 L1160.19,842.41 L1159.80,842.99 L1158.64,842.80 L1158.22,843.17 L1158.25,844.35 L1157.63,844.66 L1156.71,843.91 L1156.16,844.02 L1155.60,845.06 L1154.91,845.01 L1154.49,843.91 L1153.95,843.73 L1152.95,844.35 L1152.37,843.96 L1152.56,842.80 L1152.19,842.38 L1151.01,842.41 L1150.70,841.79 L1151.45,840.87 L1151.34,840.32 L1150.30,839.76 L1150.35,839.07 L1151.45,838.65 L1151.63,838.11 L1151.01,837.11 L1151.40,836.53 L1152.56,836.72 L1152.98,836.35 L1152.95,835.17 L1153.57,834.86 L1154.49,835.61 L1155.04,835.50 Z M1157.90,839.76 A2.3,2.3 0 1 0 1153.30,839.76 A2.3,2.3 0 1 0 1157.90,839.76 Z" fill="#4d4d4d" fill-rule="evenodd"/><path d="M1149.00,843.06 L1149.64,843.12 L1149.99,843.96 L1150.44,844.20 L1151.33,844.03 L1151.74,844.53 L1151.40,845.37 L1151.55,845.85 L1152.30,846.36 L1152.24,847.00 L1151.40,847.35 L1151.16,847.80 L1151.33,848.69 L1150.83,849.10 L1149.99,848.76 L1149.51,848.91 L1149.00,849.66 L1148.36,849.60 L1148.01,848.76 L1147.56,848.52 L1146.67,848.69 L1146.26,848.19 L1146.60,847.35 L1146.45,846.87 L1145.70,846.36 L1145.76,845.72 L1146.60,845.37 L1146.84,844.92 L1146.67,844.03 L1147.17,843.62 L1148.01,843.96 L1148.49,843.81 Z M1150.30,846.36 A1.3,1.3 0 1 0 1147.70,846.36 A1.3,1.3 0 1 0 1150.30,846.36 Z" fill="#4d4d4d" fill-rule="evenodd"/><line x1="1151.00" y1="844.36" x2="1152.20" y2="843.16" stroke="#4d4d4d" stroke-width="0.8"/><path d="M1155.60,874.58 L1156.29,874.63 L1156.71,875.73 L1157.25,875.91 L1158.25,875.29 L1158.83,875.68 L1158.64,876.84 L1159.01,877.26 L1160.19,877.23 L1160.50,877.85 L1159.75,878.77 L1159.86,879.32 L1160.90,879.88 L1160.85,880.57 L1159.75,880.99 L1159.57,881.53 L1160.19,882.53 L1159.80,883.11 L1158.64,882.92 L1158.22,883.29 L1158.25,884.47 L1157.63,884.78 L1156.71,884.03 L1156.16,884.14 L1155.60,885.18 L1154.91,885.13 L1154.49,884.03 L1153.95,883.85 L1152.95,884.47 L1152.37,884.08 L1152.56,882.92 L1152.19,882.50 L1151.01,882.53 L1150.70,881.91 L1151.45,880.99 L1151.34,880.44 L1150.30,879.88 L1150.35,879.19 L1151.45,878.77 L1151.63,878.23 L1151.01,877.23 L1151.40,876.65 L1152.56,876.84 L1152.98,876.47 L1152.95,875.29 L1153.57,874.98 L1154.49,875.73 L1155.04,875.62 Z M1157.90,879.88 A2.3,2.3 0 1 0 1153.30,879.88 A2.3,2.3 0 1 0 1157.90,879.88 Z" fill="#4d4d4d" fill-rule="evenodd"/><path d="M1149.00,883.18 L1149.64,883.24 L1149.99,884.08 L1150.44,884.32 L1151.33,884.15 L1151.74,884.65 L1151.40,885.49 L1151.55,885.97 L1152.30,886.48 L1152.24,887.12 L1151.40,887.47 L1151.16,887.92 L1151.33,888.81 L1150.83,889.22 L1149.99,888.88 L1149.51,889.03 L1149.00,889.78 L1148.36,889.72 L1148.01,888.88 L1147.56,888.64 L1146.67,888.81 L1146.26,888.31 L1146.60,887.47 L1146.45,886.99 L1145.70,886.48 L1145.76,885.84 L1146.60,885.49 L1146.84,885.04 L1146.67,884.15 L1147.17,883.74 L1148.01,884.08 L1148.49,883.93 Z M1150.30,886.48 A1.3,1.3 0 1 0 1147.70,886.48 A1.3,1.3 0 1 0 1150.30,886.48 Z" fill="#4d4d4d" fill-rule="evenodd"/><line x1="1151.00" y1="884.48" x2="1152.20" y2="883.28" stroke="#4d4d4d" stroke-width="0.8"/><path d="M1155.60,914.70 L1156.29,914.75 L1156.71,915.85 L1157.25,916.03 L1158.25,915.41 L1158.83,915.80 L1158.64,916.96 L1159.01,917.38 L1160.19,917.35 L1160.50,917.97 L1159.75,918.89 L1159.86,919.44 L1160.90,920.00 L1160.85,920.69 L1159.75,921.11 L1159.57,921.65 L1160.19,922.65 L1159.80,923.23 L1158.64,923.04 L1158.22,923.41 L1158.25,924.59 L1157.63,924.90 L1156.71,924.15 L1156.16,924.26 L1155.60,925.30 L1154.91,925.25 L1154.49,924.15 L1153.95,923.97 L1152.95,924.59 L1152.37,924.20 L1152.56,923.04 L1152.19,922.62 L1151.01,922.65 L1150.70,922.03 L1151.45,921.11 L1151.34,920.56 L1150.30,920.00 L1150.35,919.31 L1151.45,918.89 L1151.63,918.35 L1151.01,917.35 L1151.40,916.77 L1152.56,916.96 L1152.98,916.59 L1152.95,915.41 L1153.57,915.10 L1154.49,915.85 L1155.04,915.74 Z M1157.90,920.00 A2.3,2.3 0 1 0 1153.30,920.00 A2.3,2.3 0 1 0 1157.90,920.00 Z" fill="#4d4d4d" fill-rule="evenodd"/><path d="M1149.00,923.30 L1149.64,923.36 L1149.99,924.20 L1150.44,924.44 L1151.33,924.27 L1151.74,924.77 L1151.40,925.61 L1151.55,926.09 L1152.30,926.60 L1152.24,927.24 L1151.40,927.59 L1151.16,928.04 L1151.33,928.93 L1150.83,929.34 L1149.99,929.00 L1149.51,929.15 L1149.00,929.90 L1148.36,929.84 L1148.01,929.00 L1147.56,928.76 L1146.67,928.93 L1146.26,928.43 L1146.60,927.59 L1146.45,927.11 L1145.70,926.60 L1145.76,925.96 L1146.60,925.61 L1146.84,925.16 L1146.67,924.27 L1147.17,923.86 L1148.01,924.20 L1148.49,924.05 Z M1150.30,926.60 A1.3,1.3 0 1 0 1147.70,926.60 A1.3,1.3 0 1 0 1150.30,926.60 Z" fill="#4d4d4d" fill-rule="evenodd"/><line x1="1151.00" y1="924.60" x2="1152.20" y2="923.40" stroke="#4d4d4d" stroke-width="0.8"/><path d="M1155.60,954.82 L1156.29,954.87 L1156.71,955.97 L1157.25,956.15 L1158.25,955.53 L1158.83,955.92 L1158.64,957.08 L1159.01,957.50 L1160.19,957.47 L1160.50,958.09 L1159.75,959.01 L1159.86,959.56 L1160.90,960.12 L1160.85,960.81 L1159.75,961.23 L1159.57,961.77 L1160.19,962.77 L1159.80,963.35 L1158.64,963.16 L1158.22,963.53 L1158.25,964.71 L1157.63,965.02 L1156.71,964.27 L1156.16,964.38 L1155.60,965.42 L1154.91,965.37 L1154.49,964.27 L1153.95,964.09 L1152.95,964.71 L1152.37,964.32 L1152.56,963.16 L1152.19,962.74 L1151.01,962.77 L1150.70,962.15 L1151.45,961.23 L1151.34,960.68 L1150.30,960.12 L1150.35,959.43 L1151.45,959.01 L1151.63,958.47 L1151.01,957.47 L1151.40,956.89 L1152.56,957.08 L1152.98,956.71 L1152.95,955.53 L1153.57,955.22 L1154.49,955.97 L1155.04,955.86 Z M1157.90,960.12 A2.3,2.3 0 1 0 1153.30,960.12 A2.3,2.3 0 1 0 1157.90,960.12 Z" fill="#4d4d4d" fill-rule="evenodd"/><path d="M1149.00,963.42 L1149.64,963.48 L1149.99,964.32 L1150.44,964.56 L1151.33,964.39 L1151.74,964.89 L1151.40,965.73 L1151.55,966.21 L1152.30,966.72 L1152.24,967.36 L1151.40,967.71 L1151.16,968.16 L1151.33,969.05 L1150.83,969.46 L1149.99,969.12 L1149.51,969.27 L1149.00,970.02 L1148.36,969.96 L1148.01,969.12 L1147.56,968.88 L1146.67,969.05 L1146.26,968.55 L1146.60,967.71 L1146.45,967.23 L1145.70,966.72 L1145.76,966.08 L1146.60,965.73 L1146.84,965.28 L1146.67,964.39 L1147.17,963.98 L1148.01,964.32 L1148.49,964.17 Z M1150.30,966.72 A1.3,1.3 0 1 0 1147.70,966.72 A1.3,1.3 0 1 0 1150.30,966.72 Z" fill="#4d4d4d" fill-rule="evenodd"/><line x1="1151.00" y1="964.72" x2="1152.20" y2="963.52" stroke="#4d4d4d" stroke-width="0.8"/><path d="M1155.60,994.94 L1156.29,994.99 L1156.71,996.09 L1157.25,996.27 L1158.25,995.65 L1158.83,996.04 L1158.64,997.20 L1159.01,997.62 L1160.19,997.59 L1160.50,998.21 L1159.75,999.13 L1159.86,999.68 L1160.90,1000.24 L1160.85,1000.93 L1159.75,1001.35 L1159.57,1001.89 L1160.19,1002.89 L1159.80,1003.47 L1158.64,1003.28 L1158.22,1003.65 L1158.25,1004.83 L1157.63,1005.14 L1156.71,1004.39 L1156.16,1004.50 L1155.60,1005.54 L1154.91,1005.49 L1154.49,1004.39 L1153.95,1004.21 L1152.95,1004.83 L1152.37,1004.44 L1152.56,1003.28 L1152.19,1002.86 L1151.01,1002.89 L1150.70,1002.27 L1151.45,1001.35 L1151.34,1000.80 L1150.30,1000.24 L1150.35,999.55 L1151.45,999.13 L1151.63,998.59 L1151.01,997.59 L1151.40,997.01 L1152.56,997.20 L1152.98,996.83 L1152.95,995.65 L1153.57,995.34 L1154.49,996.09 L1155.04,995.98 Z M1157.90,1000.24 A2.3,2.3 0 1 0 1153.30,1000.24 A2.3,2.3 0 1 0 1157.90,1000.24 Z" fill="#4d4d4d" fill-rule="evenodd"/><path d="M1149.00,1003.54 L1149.64,1003.60 L1149.99,1004.44 L1150.44,1004.68 L1151.33,1004.51 L1151.74,1005.01 L1151.40,1005.85 L1151.55,1006.33 L1152.30,1006.84 L1152.24,1007.48 L1151.40,1007.83 L1151.16,1008.28 L1151.33,1009.17 L1150.83,1009.58 L1149.99,1009.24 L1149.51,1009.39 L1149.00,1010.14 L1148.36,1010.08 L1148.01,1009.24 L1147.56,1009.00 L1146.67,1009.17 L1146.26,1008.67 L1146.60,1007.83 L1146.45,1007.35 L1145.70,1006.84 L1145.76,1006.20 L1146.60,1005.85 L1146.84,1005.40 L1146.67,1004.51 L1147.17,1004.10 L1148.01,1004.44 L1148.49,1004.29 Z M1150.30,1006.84 A1.3,1.3 0 1 0 1147.70,1006.84 A1.3,1.3 0 1 0 1150.30,1006.84 Z" fill="#4d4d4d" fill-rule="evenodd"/><line x1="1151.00" y1="1004.84" x2="1152.20" y2="1003.64" stroke="#4d4d4d" stroke-width="0.8"/><path d="M1155.60,1035.06 L1156.29,1035.11 L1156.71,1036.21 L1157.25,1036.39 L1158.25,1035.77 L1158.83,1036.16 L1158.64,1037.32 L1159.01,1037.74 L1160.19,1037.71 L1160.50,1038.33 L1159.75,1039.25 L1159.86,1039.80 L1160.90,1040.36 L1160.85,1041.05 L1159.75,1041.47 L1159.57,1042.01 L1160.19,1043.01 L1159.80,1043.59 L1158.64,1043.40 L1158.22,1043.77 L1158.25,1044.95 L1157.63,1045.26 L1156.71,1044.51 L1156.16,1044.62 L1155.60,1045.66 L1154.91,1045.61 L1154.49,1044.51 L1153.95,1044.33 L1152.95,1044.95 L1152.37,1044.56 L1152.56,1043.40 L1152.19,1042.98 L1151.01,1043.01 L1150.70,1042.39 L1151.45,1041.47 L1151.34,1040.92 L1150.30,1040.36 L1150.35,1039.67 L1151.45,1039.25 L1151.63,1038.71 L1151.01,1037.71 L1151.40,1037.13 L1152.56,1037.32 L1152.98,1036.95 L1152.95,1035.77 L1153.57,1035.46 L1154.49,1036.21 L1155.04,1036.10 Z M1157.90,1040.36 A2.3,2.3 0 1 0 1153.30,1040.36 A2.3,2.3 0 1 0 1157.90,1040.36 Z" fill="#4d4d4d" fill-rule="evenodd"/><path d="M1149.00,1043.66 L1149.64,1043.72 L1149.99,1044.56 L1150.44,1044.80 L1151.33,1044.63 L1151.74,1045.13 L1151.40,1045.97 L1151.55,1046.45 L1152.30,1046.96 L1152.24,1047.60 L1151.40,1047.95 L1151.16,1048.40 L1151.33,1049.29 L1150.83,1049.70 L1149.99,1049.36 L1149.51,1049.51 L1149.00,1050.26 L1148.36,1050.20 L1148.01,1049.36 L1147.56,1049.12 L1146.67,1049.29 L1146.26,1048.79 L1146.60,1047.95 L1146.45,1047.47 L1145.70,1046.96 L1145.76,1046.32 L1146.60,1045.97 L1146.84,1045.52 L1146.67,1044.63 L1147.17,1044.22 L1148.01,1044.56 L1148.49,1044.41 Z M1150.30,1046.96 A1.3,1.3 0 1 0 1147.70,1046.96 A1.3,1.3 0 1 0 1150.30,1046.96 Z" fill="#4d4d4d" fill-rule="evenodd"/><line x1="1151.00" y1="1044.96" x2="1152.20" y2="1043.76" stroke="#4d4d4d" stroke-width="0.8"/><path d="M350.6,480.3 L355.3,474.8 L360.0,480.3 Z" fill="#d2d2d2"/><path d="M350.6,481.7 L355.3,487.2 L360.0,481.7 Z" fill="#d2d2d2"/><path d="M466.7,480.3 L471.4,474.8 L476.09999999999997,480.3 Z" fill="#d2d2d2"/><path d="M466.7,481.7 L471.4,487.2 L476.09999999999997,481.7 Z" fill="#d2d2d2"/><path d="M759.8,480.3 L764.5,474.8 L769.2,480.3 Z" fill="#d2d2d2"/><path d="M759.8,481.7 L764.5,487.2 L769.2,481.7 Z" fill="#d2d2d2"/><path d="M1052.8,480.3 L1057.5,474.8 L1062.2,480.3 Z" fill="#d2d2d2"/><path d="M1052.8,481.7 L1057.5,487.2 L1062.2,481.7 Z" fill="#d2d2d2"/><path d="M146.4,481.4 L155.4,481.4 L150.9,486.9 Z" fill="#181d33"/></svg>
<div style="position:absolute;left:0;top:0;z-index:2"><div class="t" style="left:425.60px;top:149.74px;font-size:12px;line-height:12px;color:#4a4a4a;font-weight:normal;font-style:normal;-webkit-text-stroke:0.35px #4a4a4a;">CPU 1 Temp</div><div class="t" style="left:425.60px;top:202.34px;font-size:12px;line-height:12px;color:#4a4a4a;font-weight:normal;font-style:normal;-webkit-text-stroke:0.35px #4a4a4a;">42</div><div class="r" style="left:420px;top:219px;width:176px;height:1px;background:#d9d9d9;"></div><div class="t" style="left:609.60px;top:149.74px;font-size:12px;line-height:12px;color:#4a4a4a;font-weight:normal;font-style:normal;-webkit-text-stroke:0.35px #4a4a4a;">CPU 2 Temp</div><div class="t" style="left:609.60px;top:202.34px;font-size:12px;line-height:12px;color:#4a4a4a;font-weight:normal;font-style:normal;-webkit-text-stroke:0.35px #4a4a4a;">43</div><div class="r" style="left:604px;top:219px;width:176px;height:1px;background:#d9d9d9;"></div><div class="t" style="left:793.60px;top:149.74px;font-size:12px;line-height:12px;color:#4a4a4a;font-weight:normal;font-style:normal;-webkit-text-stroke:0.35px #4a4a4a;">CPU1 VR Temp</div><div class="t" style="left:793.60px;top:202.34px;font-size:12px;line-height:12px;color:#4a4a4a;font-weight:normal;font-style:normal;-webkit-text-stroke:0.35px #4a4a4a;">35</div><div class="r" style="left:788px;top:219px;width:176px;height:1px;background:#d9d9d9;"></div><div class="t" style="left:977.60px;top:149.74px;font-size:12px;line-height:12px;color:#4a4a4a;font-weight:normal;font-style:normal;-webkit-text-stroke:0.35px #4a4a4a;">CPU2 VR Temp</div><div class="t" style="left:977.60px;top:202.34px;font-size:12px;line-height:12px;color:#4a4a4a;font-weight:normal;font-style:normal;-webkit-text-stroke:0.35px #4a4a4a;">32</div><div class="r" style="left:972px;top:219px;width:176px;height:1px;background:#d9d9d9;"></div><div class="t" style="left:425.60px;top:237.24px;font-size:12px;line-height:12px;color:#4a4a4a;font-weight:normal;font-style:normal;-webkit-text-stroke:0.35px #4a4a4a;">DIMM AB VR Temp</div><div class="t" style="left:425.60px;top:289.84px;font-size:12px;line-height:12px;color:#4a4a4a;font-weight:normal;font-style:normal;-webkit-text-stroke:0.35px #4a4a4a;">32</div><div class="r" style="left:420px;top:306px;width:176px;height:1px;background:#d9d9d9;"></div><div class="t" style="left:609.60px;top:237.24px;font-size:12px;line-height:12px;color:#4a4a4a;font-weight:normal;font-style:normal;-webkit-text-stroke:0.35px #4a4a4a;">DIMM CD VR Temp</div><div class="t" style="left:609.60px;top:289.84px;font-size:12px;line-height:12px;color:#4a4a4a;font-weight:normal;font-style:normal;-webkit-text-stroke:0.35px #4a4a4a;">32</div><div class="r" style="left:604px;top:306px;width:176px;height:1px;background:#d9d9d9;"></div><div class="t" style="left:793.60px;top:237.24px;font-size:12px;line-height:12px;color:#4a4a4a;font-weight:normal;font-style:normal;-webkit-text-stroke:0.35px #4a4a4a;">DIMM EF VR Temp</div><div class="t" style="left:793.60px;top:289.84px;font-size:12px;line-height:12px;color:#4a4a4a;font-weight:normal;font-style:normal;-webkit-text-stroke:0.35px #4a4a4a;">31</div><div class="r" style="left:788px;top:306px;width:176px;height:1px;background:#d9d9d9;"></div><div class="t" style="left:977.60px;top:237.24px;font-size:12px;line-height:12px;color:#4a4a4a;font-weight:normal;font-style:normal;-webkit-text-stroke:0.35px #4a4a4a;">DIMM GH VR Temp</div><div class="t" style="left:977.60px;top:289.84px;font-size:12px;line-height:12px;color:#4a4a4a;font-weight:normal;font-style:normal;-webkit-text-stroke:0.35px #4a4a4a;">29</div><div class="r" style="left:972px;top:306px;width:176px;height:1px;background:#d9d9d9;"></div><div class="t" style="left:425.60px;top:324.74px;font-size:12px;line-height:12px;color:#4a4a4a;font-weight:normal;font-style:normal;-webkit-text-stroke:0.35px #4a4a4a;">Mezz Card Temp</div><div class="t" style="left:425.60px;top:377.34px;font-size:12px;line-height:12px;color:#4a4a4a;font-weight:normal;font-style:normal;-webkit-text-stroke:0.35px #4a4a4a;">0</div><div class="r" style="left:420px;top:394px;width:176px;height:1px;background:#d9d9d9;"></div><div class="t" style="left:609.60px;top:324.74px;font-size:12px;line-height:12px;color:#4a4a4a;font-weight:normal;font-style:normal;-webkit-text-stroke:0.35px #4a4a4a;">PCH Temp</div><div class="t" style="left:609.60px;top:377.34px;font-size:12px;line-height:12px;color:#4a4a4a;font-weight:normal;font-style:normal;-webkit-text-stroke:0.35px #4a4a4a;">50</div><div class="r" style="left:604px;top:394px;width:176px;height:1px;background:#d9d9d9;"></div><div class="t" style="left:793.60px;top:324.74px;font-size:12px;line-height:12px;color:#4a4a4a;font-weight:normal;font-style:normal;-webkit-text-stroke:0.35px #4a4a4a;">PCI Riser 1 Temp</div><div class="t" style="left:793.60px;top:377.34px;font-size:12px;line-height:12px;color:#4a4a4a;font-weight:normal;font-style:normal;-webkit-text-stroke:0.35px #4a4a4a;">42</div><div class="r" style="left:788px;top:394px;width:176px;height:1px;background:#d9d9d9;"></div><div class="t" style="left:977.60px;top:324.74px;font-size:12px;line-height:12px;color:#4a4a4a;font-weight:normal;font-style:normal;-webkit-text-stroke:0.35px #4a4a4a;">PCI Riser 2 Temp</div><div class="t" style="left:977.60px;top:377.34px;font-size:12px;line-height:12px;color:#4a4a4a;font-weight:normal;font-style:normal;-webkit-text-stroke:0.35px #4a4a4a;">34</div><div class="r" style="left:972px;top:394px;width:176px;height:1px;background:#d9d9d9;"></div><div class="t" style="left:83.00px;top:515.40px;font-size:15px;line-height:15px;color:#5c5c5c;font-weight:normal;font-style:normal;transform:scaleX(1.0479);transform-origin:0 50%;">Ambient Temp</div><div class="t" style="left:362.80px;top:515.40px;font-size:15px;line-height:15px;color:#5c5c5c;font-weight:normal;font-style:normal;transform:translateX(-100%) scaleX(1.0);transform-origin:100% 50%;">2</div><div class="t" style="left:478.60px;top:515.40px;font-size:15px;line-height:15px;color:#5c5c5c;font-weight:normal;font-style:normal;transform:translateX(-100%) scaleX(1.0);transform-origin:100% 50%;">22 °C</div><div class="t" style="left:771.60px;top:515.40px;font-size:15px;line-height:15px;color:#5c5c5c;font-weight:normal;font-style:normal;transform:translateX(-100%) scaleX(1.0);transform-origin:100% 50%;">22 °C</div><div class="t" style="left:1065.80px;top:515.40px;font-size:15px;line-height:15px;color:#5c5c5c;font-weight:normal;font-style:normal;transform:translateX(-100%) scaleX(1.0);transform-origin:100% 50%;">24 °C</div><div class="r" style="left:71px;top:536px;width:1161px;height:1px;background:#e8e8e8;"></div><div class="t" style="left:83.00px;top:555.52px;font-size:15px;line-height:15px;color:#5c5c5c;font-weight:normal;font-style:normal;transform:scaleX(1.007);transform-origin:0 50%;">CPU 1 Temp</div><div class="t" style="left:362.80px;top:555.52px;font-size:15px;line-height:15px;color:#5c5c5c;font-weight:normal;font-style:normal;transform:translateX(-100%) scaleX(1.0);transform-origin:100% 50%;">3</div><div class="t" style="left:478.60px;top:555.52px;font-size:15px;line-height:15px;color:#5c5c5c;font-weight:normal;font-style:normal;transform:translateX(-100%) scaleX(1.0);transform-origin:100% 50%;">42</div><div class="t" style="left:771.60px;top:555.52px;font-size:15px;line-height:15px;color:#5c5c5c;font-weight:normal;font-style:normal;transform:translateX(-100%) scaleX(1.0);transform-origin:100% 50%;">39</div><div class="t" style="left:1065.80px;top:555.52px;font-size:15px;line-height:15px;color:#5c5c5c;font-weight:normal;font-style:normal;transform:translateX(-100%) scaleX(1.0);transform-origin:100% 50%;">46</div><div class="r" style="left:71px;top:576px;width:1161px;height:1px;background:#e8e8e8;"></div><div class="t" style="left:83.00px;top:595.64px;font-size:15px;line-height:15px;color:#5c5c5c;font-weight:normal;font-style:normal;transform:scaleX(1.007);transform-origin:0 50%;">CPU 2 Temp</div><div class="t" style="left:362.80px;top:595.64px;font-size:15px;line-height:15px;color:#5c5c5c;font-weight:normal;font-style:normal;transform:translateX(-100%) scaleX(1.0);transform-origin:100% 50%;">4</div><div class="t" style="left:478.60px;top:595.64px;font-size:15px;line-height:15px;color:#5c5c5c;font-weight:normal;font-style:normal;transform:translateX(-100%) scaleX(1.0);transform-origin:100% 50%;">43</div><div class="t" style="left:771.60px;top:595.64px;font-size:15px;line-height:15px;color:#5c5c5c;font-weight:normal;font-style:normal;transform:translateX(-100%) scaleX(1.0);transform-origin:100% 50%;">42</div><div class="t" style="left:1065.80px;top:595.64px;font-size:15px;line-height:15px;color:#5c5c5c;font-weight:normal;font-style:normal;transform:translateX(-100%) scaleX(1.0);transform-origin:100% 50%;">51</div><div class="r" style="left:71px;top:616px;width:1161px;height:1px;background:#e8e8e8;"></div><div class="t" style="left:83.00px;top:635.76px;font-size:15px;line-height:15px;color:#5c5c5c;font-weight:normal;font-style:normal;transform:scaleX(0.9889);transform-origin:0 50%;">CPU1 VR Temp</div><div class="t" style="left:362.80px;top:635.76px;font-size:15px;line-height:15px;color:#5c5c5c;font-weight:normal;font-style:normal;transform:translateX(-100%) scaleX(1.0);transform-origin:100% 50%;">8</div><div class="t" style="left:478.60px;top:635.76px;font-size:15px;line-height:15px;color:#5c5c5c;font-weight:normal;font-style:normal;transform:translateX(-100%) scaleX(1.0);transform-origin:100% 50%;">35</div><div class="t" style="left:771.60px;top:635.76px;font-size:15px;line-height:15px;color:#5c5c5c;font-weight:normal;font-style:normal;transform:translateX(-100%) scaleX(1.0);transform-origin:100% 50%;">33</div><div class="t" style="left:1065.80px;top:635.76px;font-size:15px;line-height:15px;color:#5c5c5c;font-weight:normal;font-style:normal;transform:translateX(-100%) scaleX(1.0);transform-origin:100% 50%;">36</div><div class="r" style="left:71px;top:656px;width:1161px;height:1px;background:#e8e8e8;"></div><div class="t" style="left:83.00px;top:675.88px;font-size:15px;line-height:15px;color:#5c5c5c;font-weight:normal;font-style:normal;transform:scaleX(0.9889);transform-origin:0 50%;">CPU2 VR Temp</div><div class="t" style="left:362.80px;top:675.88px;font-size:15px;line-height:15px;color:#5c5c5c;font-weight:normal;font-style:normal;transform:translateX(-100%) scaleX(1.0);transform-origin:100% 50%;">9</div><div class="t" style="left:478.60px;top:675.88px;font-size:15px;line-height:15px;color:#5c5c5c;font-weight:normal;font-style:normal;transform:translateX(-100%) scaleX(1.0);transform-origin:100% 50%;">32</div><div class="t" style="left:771.60px;top:675.88px;font-size:15px;line-height:15px;color:#5c5c5c;font-weight:normal;font-style:normal;transform:translateX(-100%) scaleX(1.0);transform-origin:100% 50%;">31</div><div class="t" style="left:1065.80px;top:675.88px;font-size:15px;line-height:15px;color:#5c5c5c;font-weight:normal;font-style:normal;transform:translateX(-100%) scaleX(1.0);transform-origin:100% 50%;">34</div><div class="r" style="left:71px;top:696px;width:1161px;height:1px;background:#e8e8e8;"></div><div class="t" style="left:83.00px;top:716.00px;font-size:15px;line-height:15px;color:#5c5c5c;font-weight:normal;font-style:normal;transform:scaleX(1.0096);transform-origin:0 50%;">DIMM AB VR Temp</div><div class="t" style="left:362.80px;top:716.00px;font-size:15px;line-height:15px;color:#5c5c5c;font-weight:normal;font-style:normal;transform:translateX(-100%) scaleX(1.0);transform-origin:100% 50%;">10</div><div class="t" style="left:478.60px;top:716.00px;font-size:15px;line-height:15px;color:#5c5c5c;font-weight:normal;font-style:normal;transform:translateX(-100%) scaleX(1.0);transform-origin:100% 50%;">32</div><div class="t" style="left:771.60px;top:716.00px;font-size:15px;line-height:15px;color:#5c5c5c;font-weight:normal;font-style:normal;transform:translateX(-100%) scaleX(1.0);transform-origin:100% 50%;">31</div><div class="t" style="left:1065.80px;top:716.00px;font-size:15px;line-height:15px;color:#5c5c5c;font-weight:normal;font-style:normal;transform:translateX(-100%) scaleX(1.0);transform-origin:100% 50%;">33</div><div class="r" style="left:71px;top:737px;width:1161px;height:1px;background:#e8e8e8;"></div><div class="t" style="left:83.00px;top:756.12px;font-size:15px;line-height:15px;color:#5c5c5c;font-weight:normal;font-style:normal;transform:scaleX(0.9964);transform-origin:0 50%;">DIMM CD VR Temp</div><div class="t" style="left:362.80px;top:756.12px;font-size:15px;line-height:15px;color:#5c5c5c;font-weight:normal;font-style:normal;transform:translateX(-100%) scaleX(1.0);transform-origin:100% 50%;">11</div><div class="t" style="left:478.60px;top:756.12px;font-size:15px;line-height:15px;color:#5c5c5c;font-weight:normal;font-style:normal;transform:translateX(-100%) scaleX(1.0);transform-origin:100% 50%;">32</div><div class="t" style="left:771.60px;top:756.12px;font-size:15px;line-height:15px;color:#5c5c5c;font-weight:normal;font-style:normal;transform:translateX(-100%) scaleX(1.0);transform-origin:100% 50%;">30</div><div class="t" style="left:1065.80px;top:756.12px;font-size:15px;line-height:15px;color:#5c5c5c;font-weight:normal;font-style:normal;transform:translateX(-100%) scaleX(1.0);transform-origin:100% 50%;">34</div><div class="r" style="left:71px;top:777px;width:1161px;height:1px;background:#e8e8e8;"></div><div class="t" style="left:83.00px;top:796.24px;font-size:15px;line-height:15px;color:#5c5c5c;font-weight:normal;font-style:normal;transform:scaleX(0.9917);transform-origin:0 50%;">DIMM EF VR Temp</div><div class="t" style="left:362.80px;top:796.24px;font-size:15px;line-height:15px;color:#5c5c5c;font-weight:normal;font-style:normal;transform:translateX(-100%) scaleX(1.0);transform-origin:100% 50%;">12</div><div class="t" style="left:478.60px;top:796.24px;font-size:15px;line-height:15px;color:#5c5c5c;font-weight:normal;font-style:normal;transform:translateX(-100%) scaleX(1.0);transform-origin:100% 50%;">31</div><div class="t" style="left:771.60px;top:796.24px;font-size:15px;line-height:15px;color:#5c5c5c;font-weight:normal;font-style:normal;transform:translateX(-100%) scaleX(1.0);transform-origin:100% 50%;">29</div><div class="t" style="left:1065.80px;top:796.24px;font-size:15px;line-height:15px;color:#5c5c5c;font-weight:normal;font-style:normal;transform:translateX(-100%) scaleX(1.0);transform-origin:100% 50%;">33</div><div class="r" style="left:71px;top:817px;width:1161px;height:1px;background:#e8e8e8;"></div><div class="t" style="left:83.00px;top:836.36px;font-size:15px;line-height:15px;color:#5c5c5c;font-weight:normal;font-style:normal;transform:scaleX(1.0028);transform-origin:0 50%;">DIMM GH VR Temp</div><div class="t" style="left:362.80px;top:836.36px;font-size:15px;line-height:15px;color:#5c5c5c;font-weight:normal;font-style:normal;transform:translateX(-100%) scaleX(1.0);transform-origin:100% 50%;">13</div><div class="t" style="left:478.60px;top:836.36px;font-size:15px;line-height:15px;color:#5c5c5c;font-weight:normal;font-style:normal;transform:translateX(-100%) scaleX(1.0);transform-origin:100% 50%;">29</div><div class="t" style="left:771.60px;top:836.36px;font-size:15px;line-height:15px;color:#5c5c5c;font-weight:normal;font-style:normal;transform:translateX(-100%) scaleX(1.0);transform-origin:100% 50%;">27</div><div class="t" style="left:1065.80px;top:836.36px;font-size:15px;line-height:15px;color:#5c5c5c;font-weight:normal;font-style:normal;transform:translateX(-100%) scaleX(1.0);transform-origin:100% 50%;">30</div><div class="r" style="left:71px;top:857px;width:1161px;height:1px;background:#e8e8e8;"></div><div class="t" style="left:83.00px;top:876.48px;font-size:15px;line-height:15px;color:#5c5c5c;font-weight:normal;font-style:normal;transform:scaleX(1.0485);transform-origin:0 50%;">Downtime</div><div class="t" style="left:362.80px;top:876.48px;font-size:15px;line-height:15px;color:#5c5c5c;font-weight:normal;font-style:normal;transform:translateX(-100%) scaleX(1.0);transform-origin:100% 50%;">-4</div><div class="t" style="left:478.60px;top:876.48px;font-size:15px;line-height:15px;color:#5c5c5c;font-weight:normal;font-style:normal;transform:translateX(-100%) scaleX(1.0);transform-origin:100% 50%;"></div><div class="t" style="left:771.60px;top:876.48px;font-size:15px;line-height:15px;color:#5c5c5c;font-weight:normal;font-style:normal;transform:translateX(-100%) scaleX(1.0);transform-origin:100% 50%;"></div><div class="t" style="left:1065.80px;top:876.48px;font-size:15px;line-height:15px;color:#5c5c5c;font-weight:normal;font-style:normal;transform:translateX(-100%) scaleX(1.0);transform-origin:100% 50%;"></div><div class="r" style="left:71px;top:897px;width:1161px;height:1px;background:#e8e8e8;"></div><div class="t" style="left:83.00px;top:916.60px;font-size:15px;line-height:15px;color:#5c5c5c;font-weight:normal;font-style:normal;transform:scaleX(1.0242);transform-origin:0 50%;">Mezz Card Temp</div><div class="t" style="left:362.80px;top:916.60px;font-size:15px;line-height:15px;color:#5c5c5c;font-weight:normal;font-style:normal;transform:translateX(-100%) scaleX(1.0);transform-origin:100% 50%;">7</div><div class="t" style="left:478.60px;top:916.60px;font-size:15px;line-height:15px;color:#5c5c5c;font-weight:normal;font-style:normal;transform:translateX(-100%) scaleX(1.0);transform-origin:100% 50%;">0</div><div class="t" style="left:771.60px;top:916.60px;font-size:15px;line-height:15px;color:#5c5c5c;font-weight:normal;font-style:normal;transform:translateX(-100%) scaleX(1.0);transform-origin:100% 50%;">0</div><div class="t" style="left:1065.80px;top:916.60px;font-size:15px;line-height:15px;color:#5c5c5c;font-weight:normal;font-style:normal;transform:translateX(-100%) scaleX(1.0);transform-origin:100% 50%;">0</div><div class="r" style="left:71px;top:937px;width:1161px;height:1px;background:#e8e8e8;"></div><div class="t" style="left:83.00px;top:956.72px;font-size:15px;line-height:15px;color:#5c5c5c;font-weight:normal;font-style:normal;transform:scaleX(1.0164);transform-origin:0 50%;">PCH Temp</div><div class="t" style="left:362.80px;top:956.72px;font-size:15px;line-height:15px;color:#5c5c5c;font-weight:normal;font-style:normal;transform:translateX(-100%) scaleX(1.0);transform-origin:100% 50%;">14</div><div class="t" style="left:478.60px;top:956.72px;font-size:15px;line-height:15px;color:#5c5c5c;font-weight:normal;font-style:normal;transform:translateX(-100%) scaleX(1.0);transform-origin:100% 50%;">50</div><div class="t" style="left:771.60px;top:956.72px;font-size:15px;line-height:15px;color:#5c5c5c;font-weight:normal;font-style:normal;transform:translateX(-100%) scaleX(1.0);transform-origin:100% 50%;">49</div><div class="t" style="left:1065.80px;top:956.72px;font-size:15px;line-height:15px;color:#5c5c5c;font-weight:normal;font-style:normal;transform:translateX(-100%) scaleX(1.0);transform-origin:100% 50%;">52</div><div class="r" style="left:71px;top:977px;width:1161px;height:1px;background:#e8e8e8;"></div><div class="t" style="left:83.00px;top:996.84px;font-size:15px;line-height:15px;color:#5c5c5c;font-weight:normal;font-style:normal;transform:scaleX(1.0052);transform-origin:0 50%;">PCI Riser 1 Temp</div><div class="t" style="left:362.80px;top:996.84px;font-size:15px;line-height:15px;color:#5c5c5c;font-weight:normal;font-style:normal;transform:translateX(-100%) scaleX(1.0);transform-origin:100% 50%;">5</div><div class="t" style="left:478.60px;top:996.84px;font-size:15px;line-height:15px;color:#5c5c5c;font-weight:normal;font-style:normal;transform:translateX(-100%) scaleX(1.0);transform-origin:100% 50%;">42</div><div class="t" style="left:771.60px;top:996.84px;font-size:15px;line-height:15px;color:#5c5c5c;font-weight:normal;font-style:normal;transform:translateX(-100%) scaleX(1.0);transform-origin:100% 50%;">41</div><div class="t" style="left:1065.80px;top:996.84px;font-size:15px;line-height:15px;color:#5c5c5c;font-weight:normal;font-style:normal;transform:translateX(-100%) scaleX(1.0);transform-origin:100% 50%;">44</div><div class="r" style="left:71px;top:1017px;width:1161px;height:1px;background:#e8e8e8;"></div><div class="t" style="left:83.00px;top:1036.96px;font-size:15px;line-height:15px;color:#5c5c5c;font-weight:normal;font-style:normal;transform:scaleX(1.0052);transform-origin:0 50%;">PCI Riser 2 Temp</div><div class="t" style="left:362.80px;top:1036.96px;font-size:15px;line-height:15px;color:#5c5c5c;font-weight:normal;font-style:normal;transform:translateX(-100%) scaleX(1.0);transform-origin:100% 50%;">6</div><div class="t" style="left:478.60px;top:1036.96px;font-size:15px;line-height:15px;color:#5c5c5c;font-weight:normal;font-style:normal;transform:translateX(-100%) scaleX(1.0);transform-origin:100% 50%;">34</div><div class="t" style="left:771.60px;top:1036.96px;font-size:15px;line-height:15px;color:#5c5c5c;font-weight:normal;font-style:normal;transform:translateX(-100%) scaleX(1.0);transform-origin:100% 50%;">33</div><div class="t" style="left:1065.80px;top:1036.96px;font-size:15px;line-height:15px;color:#5c5c5c;font-weight:normal;font-style:normal;transform:translateX(-100%) scaleX(1.0);transform-origin:100% 50%;">35</div><div class="r" style="left:71px;top:1058px;width:1161px;height:1px;background:#e8e8e8;"></div><div class="r" style="left:71px;top:496px;width:1161px;height:1px;background:#e8e8e8;"></div><div class="t" style="left:83.00px;top:475.20px;font-size:15px;line-height:15px;color:#181d33;font-weight:normal;font-style:normal;-webkit-text-stroke:0.44px #181d33;">Channel</div><div class="t" style="left:343.00px;top:475.20px;font-size:15px;line-height:15px;color:#181d33;font-weight:normal;font-style:normal;transform:translateX(-100%) scaleX(0.9);transform-origin:100% 50%;-webkit-text-stroke:0.44px #181d33;">ID</div><div class="t" style="left:387.50px;top:475.20px;font-size:15px;line-height:15px;color:#181d33;font-weight:normal;font-style:normal;transform:scaleX(1.045);transform-origin:0 50%;-webkit-text-stroke:0.44px #181d33;">Last Value</div><div class="t" style="left:688.00px;top:475.20px;font-size:15px;line-height:15px;color:#181d33;font-weight:normal;font-style:normal;transform:scaleX(1.08);transform-origin:0 50%;-webkit-text-stroke:0.44px #181d33;">Minimum</div><div class="t" style="left:977.70px;top:475.20px;font-size:15px;line-height:15px;color:#181d33;font-weight:normal;font-style:normal;transform:scaleX(1.06);transform-origin:0 50%;-webkit-text-stroke:0.44px #181d33;">Maximum</div><div class="t" style="left:59.30px;top:150.00px;font-size:15px;line-height:15px;color:#4a4a4a;font-weight:normal;font-style:normal;transform:scaleX(1.06);transform-origin:0 50%;-webkit-text-stroke:0.44px #4a4a4a;">Ambient Temp</div><div class="t" style="left:59.30px;top:373.20px;font-size:15px;line-height:15px;color:#4a4a4a;font-weight:normal;font-style:normal;-webkit-text-stroke:0.44px #4a4a4a;">22 °C</div><div class="t" style="left:218.70px;top:363.15px;font-size:14px;line-height:14px;color:#4a4a4a;font-weight:normal;font-style:normal;transform:scaleX(0.93);transform-origin:0 50%;">0 °C</div><div class="t" style="left:340.00px;top:363.15px;font-size:14px;line-height:14px;color:#4a4a4a;font-weight:normal;font-style:normal;transform:scaleX(0.93);transform-origin:0 50%;">48 °C</div><div class="t" style="left:277.20px;top:158.73px;font-size:10px;line-height:10px;color:#8a8a8a;font-weight:normal;font-style:normal;transform:translateX(-50%) scaleX(1.0);transform-origin:50% 50%;">x</div><div class="r" style="left:273px;top:158.8px;width:5px;height:1px;background:#aaaaaa;"></div><div class="r" style="left:53px;top:394px;width:359px;height:1px;background:#d9d9d9;"></div><div class="t" style="left:101.50px;top:99.01px;font-size:17px;line-height:17px;color:#4a4a4a;font-weight:normal;font-style:normal;-webkit-text-stroke:0.50px #4a4a4a;">Overview</div><div class="t" style="left:263.50px;top:99.01px;font-size:17px;line-height:17px;color:#4a4a4a;font-weight:normal;font-style:normal;">Live Data</div><div class="t" style="left:406.30px;top:99.01px;font-size:17px;line-height:17px;color:#4a4a4a;font-weight:normal;font-style:normal;-webkit-text-stroke:0.50px #4a4a4a;">2</div><div class="t" style="left:427.60px;top:99.01px;font-size:17px;line-height:17px;color:#4a4a4a;font-weight:normal;font-style:normal;">days</div><div class="t" style="left:530.40px;top:99.01px;font-size:17px;line-height:17px;color:#4a4a4a;font-weight:normal;font-style:normal;-webkit-text-stroke:0.50px #4a4a4a;">30</div><div class="t" style="left:556.70px;top:99.01px;font-size:17px;line-height:17px;color:#4a4a4a;font-weight:normal;font-style:normal;">days</div><div class="t" style="left:658.20px;top:99.01px;font-size:17px;line-height:17px;color:#4a4a4a;font-weight:normal;font-style:normal;-webkit-text-stroke:0.50px #4a4a4a;">365</div><div class="t" style="left:692.30px;top:99.01px;font-size:17px;line-height:17px;color:#4a4a4a;font-weight:normal;font-style:normal;">days</div><div class="t" style="left:822.40px;top:99.01px;font-size:17px;line-height:17px;color:#4a4a4a;font-weight:normal;font-style:normal;">Historic Data</div><div class="t" style="left:1012.90px;top:99.01px;font-size:17px;line-height:17px;color:#4a4a4a;font-weight:normal;font-style:normal;">Log</div><div class="t" style="left:1130.80px;top:99.01px;font-size:17px;line-height:17px;color:#4a4a4a;font-weight:normal;font-style:normal;">Settings</div><div class="t" style="left:44.90px;top:13.38px;font-size:22px;line-height:22px;color:#fff;font-weight:normal;font-style:italic;transform:scaleX(0.92);transform-origin:0 50%;">Sensor</div><div class="t" style="left:115.40px;top:13.38px;font-size:22px;line-height:22px;color:#fff;font-weight:bold;font-style:normal;transform:scaleX(0.975);transform-origin:0 50%;">System Health Temperatures</div><div class="t" style="left:72.30px;top:42.75px;font-size:14px;line-height:14px;color:#fff;font-weight:normal;font-style:normal;transform:scaleX(0.9);transform-origin:0 50%;">OK</div></div>
</body></html>
